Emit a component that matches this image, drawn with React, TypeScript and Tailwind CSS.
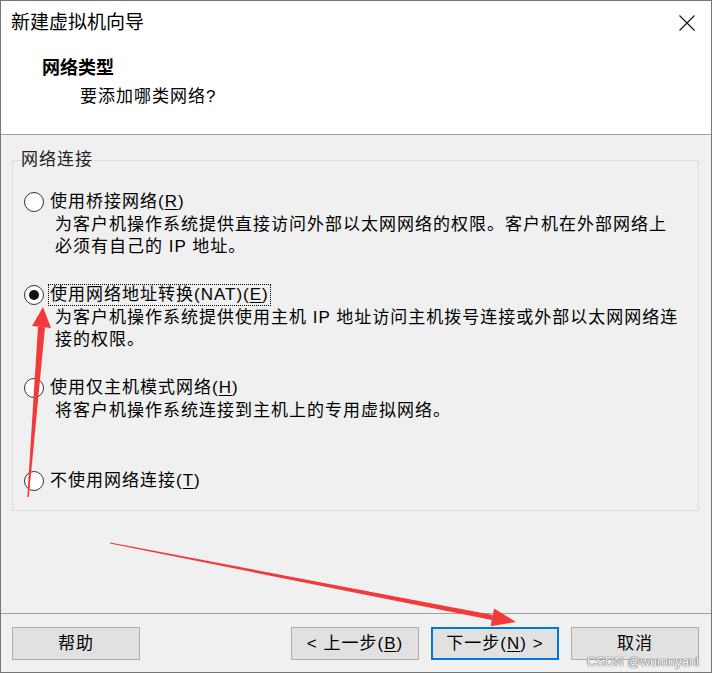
import React from "react";

function Radio({ checked }: { checked?: boolean }) {
  return (
    <span className="w-[20px] h-[20px] shrink-0 rounded-full border border-[#333333] bg-white flex items-center justify-center mr-[4px]">
      {checked ? <span className="w-[10px] h-[10px] rounded-full bg-[#111111]" /> : null}
    </span>
  );
}

function Option({
  label,
  mnemonic,
  lines,
  checked,
  last,
}: {
  label: string;
  mnemonic: string;
  lines: string[];
  checked?: boolean;
  last?: boolean;
}) {
  return (
    <div className={last ? "" : "mb-[25px]"}>
      <div className="flex items-center h-[24px]">
        <Radio checked={checked} />
        <span
          className={
            "px-[1px] leading-[20px] whitespace-nowrap border " +
            (checked ? "border-dotted border-black" : "border-transparent")
          }
        >
          {label}(<span className="underline underline-offset-2">{mnemonic}</span>)
        </span>
      </div>
      {last ? null : (
        <div className="pl-[31px] min-h-[44px] leading-[22px]">
          {lines.map((l, i) => (
            <div key={i} className="whitespace-nowrap">
              {l}
            </div>
          ))}
        </div>
      )}
    </div>
  );
}

export default function App() {
  return (
    <div className="relative w-[712px] h-[673px] border border-[#767676] flex flex-col bg-[#f0f0f0] text-black font-['Liberation_Sans','Noto_Sans_CJK_SC',sans-serif] text-[17px] tracking-[1px]">
      <div className="bg-white h-[133px] flex flex-col shrink-0">
        <div className="h-[44px] flex items-center justify-between pl-[10px] pr-[16px]">
          <span className="text-[19px] tracking-normal">新建虚拟机向导</span>
          <svg width="16" height="16" viewBox="0 0 16 16">
            <path d="M0.5 0.5 L15.5 15.5 M15.5 0.5 L0.5 15.5" stroke="#111" strokeWidth="1.1" fill="none" />
          </svg>
        </div>
        <div className="mt-[12px] pl-[41px] text-[18px] font-bold leading-[22px] tracking-normal">网络类型</div>
        <div className="mt-[7px] pl-[79px] leading-[22px]">要添加哪类网络?</div>
      </div>
      <div className="h-px bg-[#a0a0a0] shrink-0" />
      <div className="flex-1 pl-[11px] pr-[12px] pt-[14px]">
        <fieldset className="border border-[#dcdcdc] pb-[17px]">
          <legend className="ml-[8px] leading-[22px] text-[#222]">网络连接</legend>
          <div className="pl-[11px] pt-[19px]">
            <Option
              label="使用桥接网络"
              mnemonic="R"
              lines={[
                "为客户机操作系统提供直接访问外部以太网网络的权限。客户机在外部网络上",
                "必须有自己的 IP 地址。",
              ]}
            />
            <Option
              label="使用网络地址转换(NAT)"
              mnemonic="E"
              checked
              lines={[
                "为客户机操作系统提供使用主机 IP 地址访问主机拨号连接或外部以太网网络连",
                "接的权限。",
              ]}
            />
            <Option
              label="使用仅主机模式网络"
              mnemonic="H"
              lines={["将客户机操作系统连接到主机上的专用虚拟网络。"]}
            />
            <Option label="不使用网络连接" mnemonic="T" lines={[]} last />
          </div>
        </fieldset>
      </div>
      <div className="h-px bg-[#a0a0a0] shrink-0" />
      <div className="h-[58px] shrink-0 flex items-start pt-[13px] pl-[11px] pr-[12px]">
        <button className="w-[128px] h-[33px] bg-[#e1e1e1] border border-[#adadad] flex items-center justify-center">
          帮助
        </button>
        <div className="flex-1" />
        <div className="flex gap-[12px]">
          <button className="w-[128px] h-[33px] bg-[#e1e1e1] border border-[#adadad] flex items-center justify-center whitespace-nowrap">
            &lt; 上一步(<span className="underline underline-offset-2">B</span>)
          </button>
          <button className="w-[128px] h-[33px] bg-[#e1e1e1] border-2 border-[#0078d7] flex items-center justify-center whitespace-nowrap">
            下一步(<span className="underline underline-offset-2">N</span>) &gt;
          </button>
          <button className="w-[128px] h-[33px] bg-[#e1e1e1] border border-[#adadad] flex items-center justify-center">
            取消
          </button>
        </div>
      </div>

      <svg
        className="absolute left-[-1px] top-[-1px] pointer-events-none"
        width="712"
        height="673"
        viewBox="0 0 712 673"
      >
        <polygon points="27.3,497 28.8,497 45,327.3 38,326.7" fill="#f23a3a" />
        <polygon points="43,307 51,328 32,326" fill="#f23a3a" />
        <polygon points="109.9,543.6 110.1,542.4 492.9,615 491.9,619.9" fill="#f23a3a" />
        <polygon points="516,622 494.1,608.6 490.7,626.2" fill="#f23a3a" />
      </svg>
      <div className="absolute right-[12px] bottom-[3px] text-[13px] tracking-normal leading-[15px] text-white font-['Liberation_Sans',sans-serif] [text-shadow:0_0_1px_#666,0_0_1px_#666,0_0_1px_#666]">
        CSDN @wumuyanl
      </div>
    </div>
  );
}
